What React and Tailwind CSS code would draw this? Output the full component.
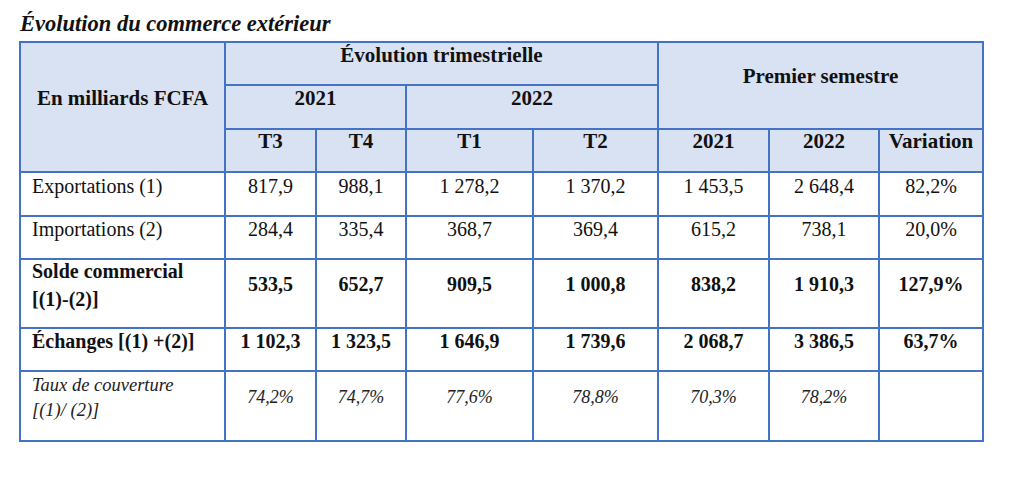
import React from "react";

function H({ className = "", children }) {
  return <div className={"bg-[#d9e2f3] text-[#111] font-bold text-[21px] leading-[20px] text-center " + className}>{children}</div>;
}
function C({ className = "", children }) {
  return <div className={"bg-white " + className}>{children}</div>;
}

const body = "text-[20px] leading-[20px] text-[#111]";

const rows = [
  { label: "Exportations (1)", vals: ["817,9", "988,1", "1 278,2", "1 370,2", "1 453,5", "2 648,4", "82,2%"], pt: "pt-[3px]" },
  { label: "Importations (2)", vals: ["284,4", "335,4", "368,7", "369,4", "615,2", "738,1", "20,0%"], pt: "pt-[2px]" },
];

export default function App() {
  return (
    <div className="w-[1024px] h-[495px] bg-white pl-[19px] font-['Liberation_Serif','Times_New_Roman',serif]">
      <div className="h-[41px] pt-[14px] pl-[1px] text-[22.5px] leading-[20px] font-bold italic text-[#111]">
        Évolution du commerce extérieur
      </div>
      <div className="grid w-max bg-[#4472c4] p-[2px] gap-[2px] grid-cols-[203px_89px_88px_125px_123px_109px_108px_102px] grid-rows-[41px_42px_41px_42px_41px_67px_41px_68px]">
        <H className="row-span-3 pt-[45px]">En milliards FCFA</H>
        <H className="col-span-4 pt-[2px]">Évolution trimestrielle</H>
        <H className="col-span-3 row-span-2 pt-[23px]">Premier semestre</H>
        <H className="col-span-2 pt-[2px]">2021</H>
        <H className="col-span-2 pt-[2px]">2022</H>
        {["T3", "T4", "T1", "T2", "2021", "2022", "Variation"].map((t, i) => (
          <H key={i} className="pt-[1px]">{t}</H>
        ))}
        {rows.map((r) => (
          <React.Fragment key={r.label}>
            <C className={body + " pl-[11px] " + r.pt}>{r.label}</C>
            {r.vals.map((v, i) => (
              <C key={i} className={body + " text-center " + r.pt}>{v}</C>
            ))}
          </React.Fragment>
        ))}
        <C className={body + " pl-[11px] pt-[1px] font-bold"}>
          <div>Solde commercial</div>
          <div className="mt-[8px]">[(1)-(2)]</div>
        </C>
        {["533,5", "652,7", "909,5", "1 000,8", "838,2", "1 910,3", "127,9%"].map((v, i) => (
          <C key={i} className={body + " text-center font-bold pt-[14px]"}>{v}</C>
        ))}
        <C className={body + " pl-[11px] pt-[2px] font-bold"}>Échanges [(1) +(2)]</C>
        {["1 102,3", "1 323,5", "1 646,9", "1 739,6", "2 068,7", "3 386,5", "63,7%"].map((v, i) => (
          <C key={i} className={body + " text-center font-bold pt-[2px]"}>{v}</C>
        ))}
        <C className="pl-[11px] pt-[4px] italic text-[18.5px] leading-[18px] text-[#222]">
          <div>Taux de couverture</div>
          <div className="mt-[7px]">[(1)/ (2)]</div>
        </C>
        {["74,2%", "74,7%", "77,6%", "78,8%", "70,3%", "78,2%", ""].map((v, i) => (
          <C key={i} className="text-center italic text-[18px] leading-[20px] pt-[15px] text-[#222]">{v}</C>
        ))}
      </div>
    </div>
  );
}
